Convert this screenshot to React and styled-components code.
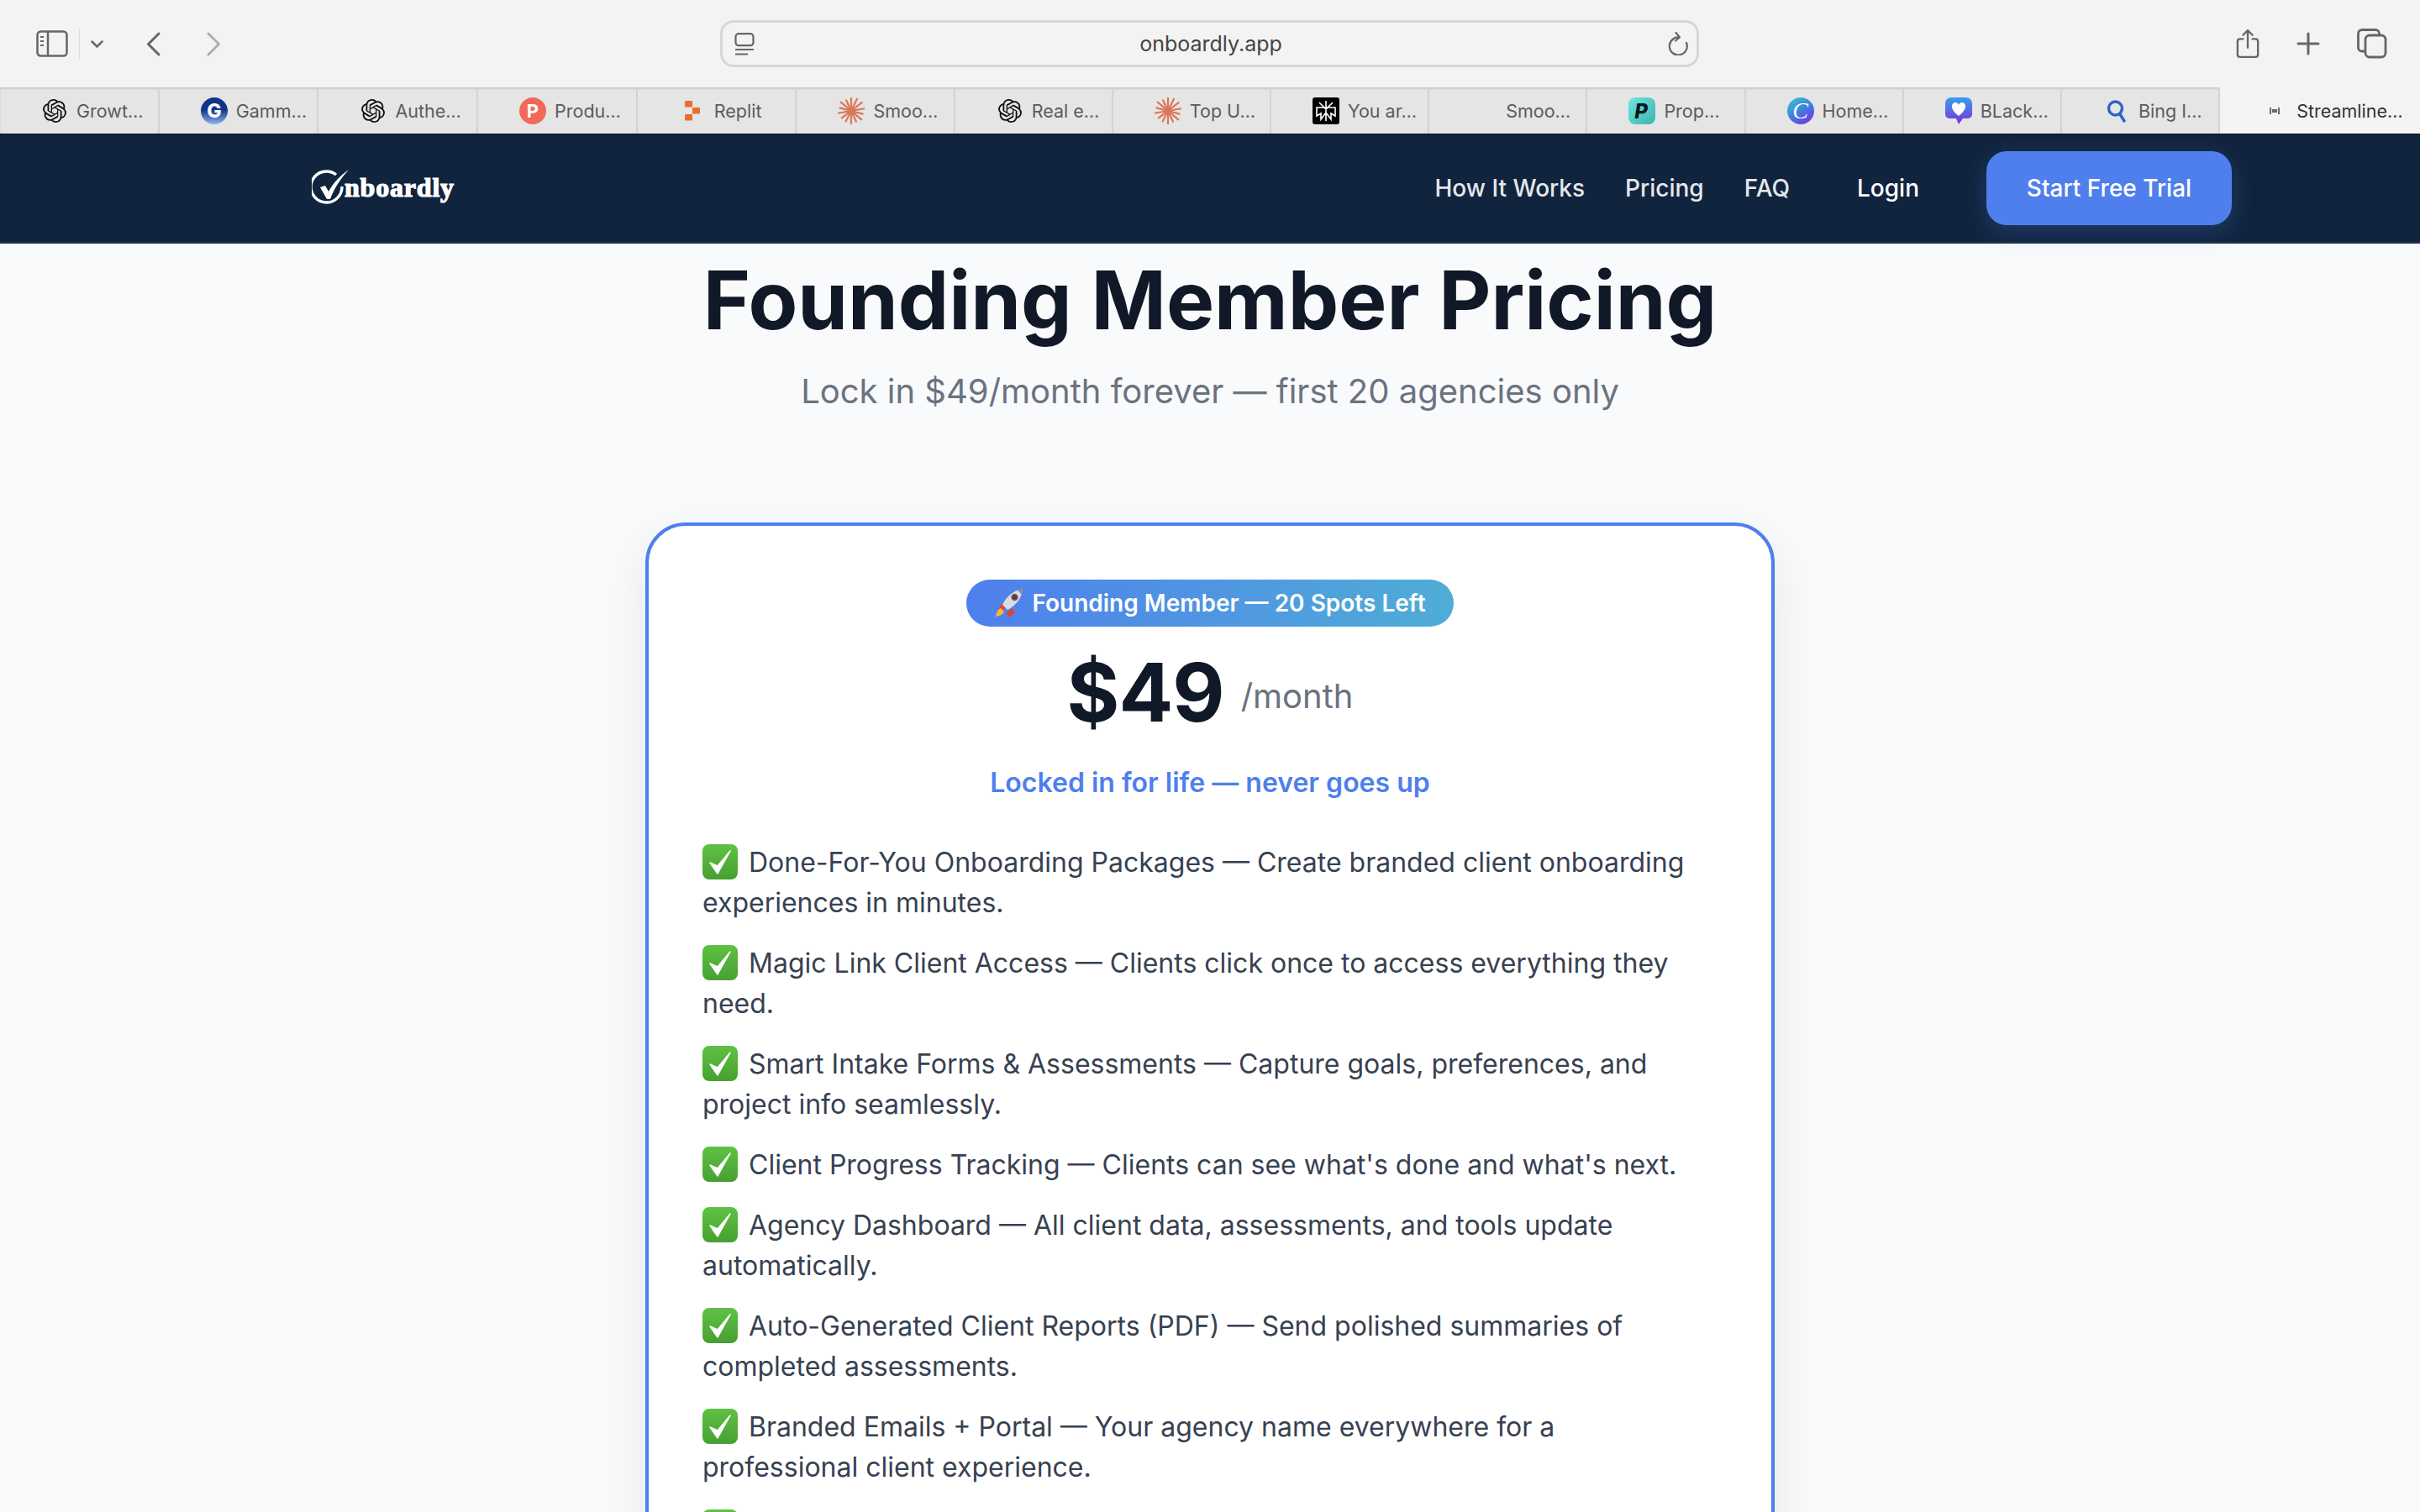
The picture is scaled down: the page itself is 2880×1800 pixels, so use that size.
import React from "react";
import styled, { createGlobalStyle } from "styled-components";
import { SiOpenai } from "react-icons/si";

const Global = createGlobalStyle`
  html, body {
    margin: 0;
    padding: 0;
    height: 1800px;
    overflow: hidden;
    background: #f9fafb;
    font-family: Inter, "Noto Sans", "Liberation Sans", sans-serif;
  }
  * { box-sizing: border-box; }
`;

const Page = styled.div`
  width: 2880px;
  height: 1800px;
  overflow: hidden;
  display: flex;
  flex-direction: column;
  background: #f9fafb;
`;

/* browser chrome */
const Toolbar = styled.div`
  height: 104px;
  flex: none;
  background: #f3f3f3;
  display: grid;
  grid-template-columns: 857px 1165px 1fr;
  align-items: center;
`;
const ToolGroup = styled.div`
  display: flex;
  align-items: center;
  height: 100%;
  padding-left: 43px;
  color: #666;
`;
const ToolGroupRight = styled(ToolGroup)`
  justify-content: flex-end;
  padding: 0 39px 0 0;
  gap: 44px;
`;
const Divider = styled.div`
  width: 1px;
  height: 36px;
  margin: 0 13px;
  background: #dcdcdc;
`;
const AddressBar = styled.div`
  height: 56px;
  border: 3px solid #d6d6d6;
  border-radius: 16px;
  display: flex;
  align-items: center;
  justify-content: space-between;
  padding: 0 10px 0 14px;
  color: #666;
`;
const AddressText = styled.span`
  font-size: 25px;
  color: #444;
`;
const Tabs = styled.div`
  height: 56px;
  flex: none;
  display: grid;
  grid-template-columns: repeat(5, 189.7px) repeat(9, 188.2px) 1fr;
  background: #e5e5e5;
  box-shadow: inset 0 2px 2px rgba(0, 0, 0, 0.12);
  border-bottom: 1px solid #070d18;
`;
const Tab = styled.div`
  display: flex;
  align-items: center;
  gap: 10px;
  padding-left: 49px;
  overflow: hidden;
  font-size: 21.5px;
  white-space: nowrap;
  color: ${({ $active }) => ($active ? "#333" : "#5c5c5c")};
  background: ${({ $active }) => ($active ? "#f3f3f3" : "transparent")};
  border-right: ${({ $active }) => ($active ? "none" : "2px solid #d3d3d3")};
`;
const FavSlot = styled.span`
  width: 32px;
  height: 32px;
  flex: none;
  display: flex;
  align-items: center;
  justify-content: center;
  color: #111;
`;

/* site nav */
const Nav = styled.nav`
  height: 130px;
  flex: none;
  background: #11243e;
  border-bottom: 2px solid #1f3250;
  display: flex;
  align-items: center;
  justify-content: space-between;
  padding: 0 224px 0 371px;
`;
const Logo = styled.div`
  display: flex;
  align-items: center;
  color: #fff;
`;
const LogoText = styled.span`
  font-family: "Liberation Serif", serif;
  font-weight: 700;
  font-size: 32px;
  letter-spacing: 0.8px;
  margin-left: -7px;
  margin-top: -2px;
  -webkit-text-stroke: 1.2px #fff;
`;
const NavLinks = styled.div`
  display: flex;
  align-items: center;
  gap: 48px;
`;
const NavLink = styled.a`
  font-size: 28px;
  font-weight: 500;
  color: #e5e7eb;
`;
const LoginLink = styled(NavLink)`
  color: #fff;
  margin-left: 32px;
  margin-right: 32px;
`;
const CtaButton = styled.a`
  width: 292px;
  height: 88px;
  border-radius: 24px;
  background: #4f7fed;
  color: #fff;
  font-size: 28px;
  font-weight: 500;
  display: flex;
  align-items: center;
  justify-content: center;
  box-shadow: 0 8px 28px rgba(79, 127, 237, 0.25);
`;

/* pricing */
const Section = styled.main`
  display: flex;
  flex-direction: column;
  align-items: center;
`;
const Title = styled.h1`
  margin: 19px 0 0;
  font-size: 96px;
  line-height: 96px;
  font-weight: 700;
  color: #111827;
`;
const Subtitle = styled.p`
  margin: 33px 0 0;
  font-size: 40px;
  line-height: 56px;
  color: #6b7280;
`;
const Card = styled.div`
  width: 1344px;
  margin-top: 128px;
  padding: 64px 64px;
  background: #fff;
  border: 4px solid #4f7fed;
  border-radius: 48px;
  box-shadow: 0 20px 60px rgba(0, 0, 0, 0.08);
  display: flex;
  flex-direction: column;
  align-items: center;
`;
const Badge = styled.div`
  height: 56px;
  width: 580px;
  border-radius: 28px;
  background: linear-gradient(90deg, #4f7fed, #4fadd6);
  color: #fff;
  font-size: 28px;
  font-weight: 600;
  display: flex;
  align-items: center;
  justify-content: center;
  gap: 9px;
`;
const PriceRow = styled.div`
  display: flex;
  align-items: center;
  gap: 20px;
  margin-top: 18px;
`;
const Price = styled.span`
  font-size: 96px;
  line-height: 120px;
  font-weight: 700;
  letter-spacing: -1px;
  color: #111827;
`;
const Period = styled.span`
  font-size: 40px;
  margin-top: 8px;
  color: #6b7280;
`;
const Locked = styled.div`
  margin-top: 24px;
  font-size: 32px;
  line-height: 48px;
  font-weight: 600;
  color: #4f7fed;
`;
const Features = styled.ul`
  list-style: none;
  margin: 47px 0 0;
  padding: 0;
  width: 100%;
  display: flex;
  flex-direction: column;
  gap: 24px;
`;
const Feature = styled.li`
  font-size: 32px;
  line-height: 48px;
  color: #374151;
`;
const CheckMark = styled.svg`
  width: 42px;
  height: 42px;
  margin-right: 13px;
  vertical-align: -9px;
`;

const Knot = () => <SiOpenai size={28} />;

const Burst = () => (
  <svg width="32" height="32" viewBox="0 0 32 32">
    {[0, 26, 52, 80, 105, 130, 155, 180, 207, 233, 260, 285, 310, 335].map((a) => (
      <line key={a} x1="16" y1="16" x2="16" y2={a % 2 ? 2 : 0} stroke="#d97757" strokeWidth="2.2" strokeLinecap="round" transform={`rotate(${a} 16 16)`} />
    ))}
  </svg>
);

const Gamma = () => (
  <svg width="32" height="32" viewBox="0 0 32 32">
    <defs>
      <linearGradient id="gam" x1="0" y1="0" x2="0" y2="1">
        <stop offset="0.45" stopColor="#12338a" />
        <stop offset="1" stopColor="#8db4ea" />
      </linearGradient>
    </defs>
    <circle cx="16" cy="16" r="16" fill="url(#gam)" />
    <text x="16" y="24" textAnchor="middle" fontFamily="Inter, sans-serif" fontWeight="800" fontSize="23" fill="#fff">G</text>
  </svg>
);

const ProductHunt = () => (
  <svg width="32" height="32" viewBox="0 0 32 32">
    <circle cx="16" cy="16" r="16" fill="#f0695a" />
    <text x="16" y="24" textAnchor="middle" fontFamily="Inter, sans-serif" fontWeight="700" fontSize="22" fill="#fff">P</text>
  </svg>
);

const Replit = () => (
  <svg width="20" height="24" viewBox="0 0 20 24" fill="#e4702c">
    <rect x="1" y="0" width="9" height="7.5" rx="1" />
    <rect x="10" y="8" width="9" height="7.5" rx="1" />
    <rect x="1" y="16" width="9" height="7.5" rx="1" />
  </svg>
);

const Perplexity = () => (
  <svg width="32" height="32" viewBox="0 0 32 32">
    <rect width="32" height="32" rx="3" fill="#000" />
    <g stroke="#fff" strokeWidth="1.6" fill="none">
      <path d="M16 4v24M8 6l8 8 8-8M5 12h22v10l-5-3v7l-6-8-6 8v-7l-5 3z" />
    </g>
  </svg>
);

const Prop = () => (
  <svg width="32" height="32" viewBox="0 0 32 32">
    <defs>
      <linearGradient id="prp" x1="0" y1="0" x2="1" y2="1">
        <stop offset="0" stopColor="#6fe6e0" />
        <stop offset="1" stopColor="#3fb3ad" />
      </linearGradient>
    </defs>
    <rect width="32" height="32" rx="8" fill="url(#prp)" />
    <text x="15" y="25" textAnchor="middle" fontFamily="Inter, sans-serif" fontStyle="italic" fontWeight="800" fontSize="24" fill="#07191d">P</text>
  </svg>
);

const Canva = () => (
  <svg width="32" height="32" viewBox="0 0 32 32">
    <defs>
      <linearGradient id="cnv" x1="0.1" y1="0" x2="0.8" y2="1">
        <stop offset="0" stopColor="#3cc4c9" />
        <stop offset="0.55" stopColor="#3f7be0" />
        <stop offset="1" stopColor="#7a2fe0" />
      </linearGradient>
    </defs>
    <circle cx="16" cy="16" r="16" fill="url(#cnv)" />
    <text x="15.5" y="25" textAnchor="middle" fontFamily="Liberation Serif, serif" fontStyle="italic" fontSize="28" fill="#fff">C</text>
  </svg>
);

const HeartBubble = () => (
  <svg width="32" height="32" viewBox="0 0 32 32">
    <defs>
      <linearGradient id="hrt" x1="0" y1="0" x2="0" y2="1">
        <stop offset="0" stopColor="#33a1f0" />
        <stop offset="1" stopColor="#7a2fdc" />
      </linearGradient>
    </defs>
    <path d="M7 0h18a7 7 0 0 1 7 7v13a5 5 0 0 1-5 5h-6l-5 7-3-7H5a5 5 0 0 1-5-5V7a7 7 0 0 1 7-7z" fill="url(#hrt)" />
    <path d="M16 22C7 15 7 10 9 7.500c2.500-2.500 6-1.500 7 1.500 1-3 4.500-4 7-1.500 2 2.500 2 7.500-7 14.500z" fill="#fff" />
  </svg>
);

const BingGlass = () => (
  <svg width="26" height="30" viewBox="0 0 26 30" fill="none" stroke="#2a66c4" strokeWidth="3.4" strokeLinecap="round">
    <circle cx="11.500" cy="12" r="8" />
    <line x1="17" y1="19" x2="22" y2="27" />
  </svg>
);

const Streamline = () => (
  <svg width="12" height="12" viewBox="0 0 12 12" fill="#667">
    <rect x="0" y="2" width="2" height="8" />
    <rect x="3" y="4" width="6" height="4" />
    <rect x="10" y="2" width="2" height="8" />
  </svg>
);

const tabs = [
  { label: "Growt…", icon: <Knot /> },
  { label: "Gamm…", icon: <Gamma /> },
  { label: "Authe…", icon: <Knot /> },
  { label: "Produ…", icon: <ProductHunt /> },
  { label: "Replit", icon: <Replit /> },
  { label: "Smoo…", icon: <Burst /> },
  { label: "Real e…", icon: <Knot /> },
  { label: "Top U…", icon: <Burst /> },
  { label: "You ar…", icon: <Perplexity /> },
  { label: "Smoo…", icon: null },
  { label: "Prop…", icon: <Prop /> },
  { label: "Home…", icon: <Canva /> },
  { label: "BLack…", icon: <HeartBubble /> },
  { label: "Bing I…", icon: <BingGlass /> },
  { label: "Streamline…", icon: <Streamline />, active: true },
];

const features = [
  "Done-For-You Onboarding Packages — Create branded client onboarding experiences in minutes.",
  "Magic Link Client Access — Clients click once to access everything they need.",
  "Smart Intake Forms & Assessments — Capture goals, preferences, and project info seamlessly.",
  "Client Progress Tracking — Clients can see what's done and what's next.",
  "Agency Dashboard — All client data, assessments, and tools update automatically.",
  "Auto-Generated Client Reports (PDF) — Send polished summaries of completed assessments.",
  "Branded Emails + Portal — Your agency name everywhere for a professional client experience.",
  "",
];

const CheckEmoji = () => (
  <CheckMark viewBox="0 0 42 42">
    <defs>
      <linearGradient id="chk" x1="0" y1="0" x2="0" y2="1">
        <stop offset="0" stopColor="#5fc243" />
        <stop offset="1" stopColor="#47a032" />
      </linearGradient>
    </defs>
    <rect width="42" height="42" rx="8" fill="url(#chk)" />
    <path d="M9 22l9 13L33 8l-15 18z" fill="#fff" stroke="#fff" strokeWidth="1.500" strokeLinejoin="round" />
  </CheckMark>
);

const Rocket = () => (
  <svg width="36" height="36" viewBox="0 0 36 36">
    <path d="M4 26l6-8 5 3-5 7z" fill="#e2452f" />
    <path d="M14 30l8-6 3 5-7 6z" fill="#e2452f" />
    <path d="M2 34c1-6 3-9 6-10l4 4c-1 3-4 5-10 6z" fill="#f6b73c" />
    <path d="M10 20C15 9 24 3 34 1c-1 11-7 19-18 25z" fill="#d9dde2" />
    <path d="M28 2l6-1-1 7c-2-2-4-4-5-6z" fill="#8a8f99" />
    <circle cx="24.500" cy="11" r="3.500" fill="#7a2b2b" stroke="#667" strokeWidth="1.500" />
  </svg>
);

const App = () => (
  <Page>
    <Global />
    <Toolbar>
      <ToolGroup>
        <svg width="38" height="32" viewBox="0 0 38 32" fill="none" stroke="currentColor" strokeWidth="2.500">
          <rect x="1.500" y="1.500" width="35" height="29" rx="4" />
          <line x1="14" y1="2" x2="14" y2="30" />
          <path d="M5 8h4M5 13h4M5 18h4" strokeWidth="2" />
        </svg>
        <Divider />
        <svg width="15" height="9" viewBox="0 0 15 9" fill="none" stroke="currentColor" strokeWidth="2.500" strokeLinecap="round">
          <path d="M1.500 1.500L7.500 7.500L13.500 1.500" />
        </svg>
        <svg style={{ marginLeft: 51 }} width="17" height="29" viewBox="0 0 17 29" fill="none" stroke="currentColor" strokeWidth="3" strokeLinecap="round" strokeLinejoin="round">
          <path d="M15 2L2.500 14.500L15 27" />
        </svg>
        <svg style={{ marginLeft: 55 }} width="17" height="29" viewBox="0 0 17 29" fill="none" stroke="#aeaeae" strokeWidth="3" strokeLinecap="round" strokeLinejoin="round">
          <path d="M2 2L14.500 14.500L2 27" />
        </svg>
      </ToolGroup>
      <AddressBar>
        <svg width="24" height="27" viewBox="0 0 24 27" fill="none" stroke="currentColor" strokeWidth="2.200">
          <rect x="1.500" y="1.200" width="21" height="14" rx="3.500" />
          <path d="M1 20h22M1 25.500h15" />
        </svg>
        <AddressText>onboardly.app</AddressText>
        <svg width="25" height="28" viewBox="0 0 25 28" fill="none" stroke="currentColor" strokeWidth="2.200" strokeLinecap="round" strokeLinejoin="round">
          <path d="M14 6.500A10.500 10.500 0 1 0 23 13" />
          <path d="M10.500 1L15 6.500L10 10.500" />
        </svg>
      </AddressBar>
      <ToolGroupRight>
        <svg width="28" height="38" viewBox="0 0 30 38" fill="none" stroke="currentColor" strokeWidth="2.500" strokeLinecap="round" strokeLinejoin="round">
          <path d="M9 13H5a3 3 0 0 0-3 3v17a3 3 0 0 0 3 3h20a3 3 0 0 0 3-3V16a3 3 0 0 0-3-3h-4" />
          <path d="M15 24V2M9 8l6-6 6 6" />
        </svg>
        <svg width="28" height="28" viewBox="0 0 28 28" fill="none" stroke="currentColor" strokeWidth="3" strokeLinecap="round">
          <path d="M14 2v24M2 14h24" />
        </svg>
        <svg width="36" height="36" viewBox="0 0 36 36" fill="none" stroke="currentColor" strokeWidth="2.800" strokeLinejoin="round">
          <rect x="10" y="8" width="24" height="26" rx="5" />
          <path d="M10 27H6a4.500 4.500 0 0 1-4.500-4.500V6A4.500 4.500 0 0 1 6 1.500h16A4.500 4.500 0 0 1 26.500 6v2" />
        </svg>
      </ToolGroupRight>
    </Toolbar>
    <Tabs>
      {tabs.map((t, i) => (
        <Tab key={i} $active={t.active}>
          <FavSlot>{t.icon}</FavSlot>
          {t.label}
        </Tab>
      ))}
    </Tabs>
    <Nav>
      <Logo>
        <svg width="46" height="46" viewBox="0 0 46 46">
          <path d="M29 7A18.500 18.500 0 1 0 36 21" fill="none" stroke="#fff" strokeWidth="3.400" />
          <path d="M10 22l6-2 4 7C26 16 34 8 44 1 34 12 27 23 22 36h-4z" fill="#fff" />
        </svg>
        <LogoText>nboardly</LogoText>
      </Logo>
      <NavLinks>
        <NavLink>How It Works</NavLink>
        <NavLink>Pricing</NavLink>
        <NavLink>FAQ</NavLink>
        <LoginLink>Login</LoginLink>
        <CtaButton>Start Free Trial</CtaButton>
      </NavLinks>
    </Nav>
    <Section>
      <Title>Founding Member Pricing</Title>
      <Subtitle>Lock in $49/month forever — first 20 agencies only</Subtitle>
      <Card>
        <Badge>
          <Rocket />
          Founding Member — 20 Spots Left
        </Badge>
        <PriceRow>
          <Price>$49</Price>
          <Period>/month</Period>
        </PriceRow>
        <Locked>Locked in for life — never goes up</Locked>
        <Features>
          {features.map((f, i) => (
            <Feature key={i}>
              <CheckEmoji />
              {f}
            </Feature>
          ))}
        </Features>
      </Card>
    </Section>
  </Page>
);

export default App;
